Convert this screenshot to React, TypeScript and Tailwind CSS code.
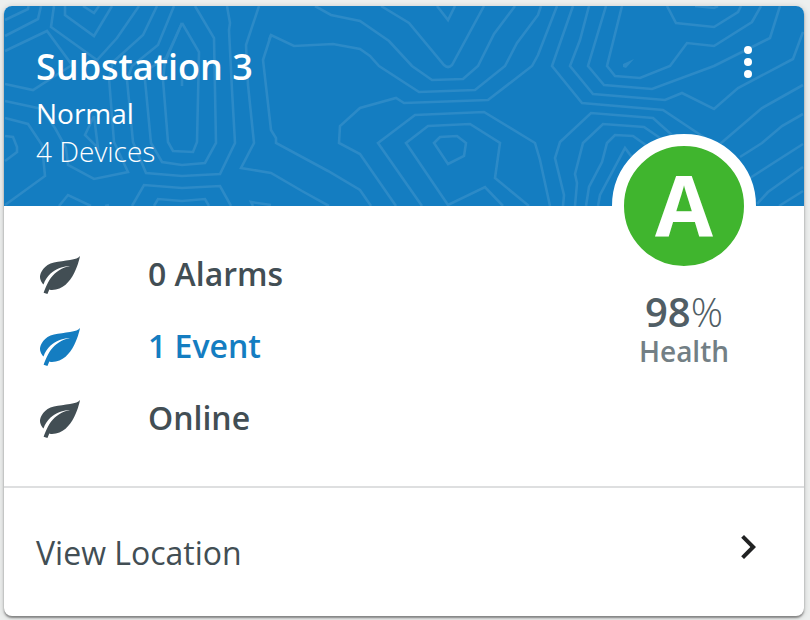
import React from 'react';

const contours = [
  'M5 20L28 9L28.500 6', 'M5 36L38 19L41 6', 'M5 51L47 31L72 65L33 90L5 84', 'M54 6L51 27L97 60L117 38L139 6',
  'M65 6L65 15L94 36L112 6', 'M83 6L94 13L99 6',
  'M5 101L42 109L55 128L66 148L68 165L94 179L128 172L114 142L109 78L113 62L143 35L157 6',
  'M5 118L28 124L42 145L45 176L5 205', 'M5 136L13 137L17 147L17 152L5 161',
  'M94 116L85 135L98 148L94 116', 'M59 206L68 195L91 206', 'M105 206L109 205',
  'M174 6L158 45L132 66L127 80L133 142L146 173L182 176L220 174L235 143L232 90L229 30L230 23L227 6',
  'M182 23L166 58L147 70L145 80L151 143L162 162L182 165L205 163L216 143L214 38L195 6',
  'M182 23L165 62L163 80L168 142L173 151L193 152L197 142L199 52L182 23',
  'M182 70L182 86', 'M132 206L144 185L182 188L220 186L231 206', 'M154 206L158 199L182 201L205 199L209 206',
  'M259 6L246 45L248 85L254 143L241 168L271 173L302 191L329 206',
  'M271 35L263 60L271 130L276 138L276 143L328 171L360 190L371 206',
  'M253 206L251 202L271 205',
  'M315 6L331 15L360 21L389 41L412 66L432 80L463 79L478 66L494 34L515 6',
  'M381 6L409 23L444 65Q448 69 452 65L484 6',
  'M437 6L448 20L455 6', 'M269 40L271 35L294 46L333 44L360 49L370 56L379 66L419 92L475 90L505 66L517 43L538 15L541 6',
  'M396 206L360 154L339 143L340 126L360 108L396 98L404 103L488 100L532 66L538 55L557 6',
  'M422 206L378 143L415 115L484 112L535 143L540 160L550 206',
  'M529 206L495 178L500 143L470 124L428 126L406 143L448 205L485 187L503 206',
  'M448 164L434 143L440 137L457 136L466 143L464 156Z',
  'M573 6L552 66L582 103L663 110L720 148',
  'M589 6L580 40L570 66L593 94L665 100L682 93L714 109L738 88L793 59L803 32',
  'M606 6L588 66L604 85L652 89L714 66L770 38L780 6',
  'M622 6L607 66L615 76L640 78L670 66L687 43L714 46L752 22L761 6',
  'M667 6L676 23L714 27L738 12L741 6', 'M695 6L714 8L718 6',
  'M563 206L564 195L555 158L560 142L591 113L653 118L672 135',
  'M575 206L577 183L575 174L583 143L603 124L644 127L663 140',
  'M586 206L589 187L602 162L607 143L615 135L633 136L650 148',
  'M598 206L600 195L625 148L640 168',
  'M720 144L762 108L803 85', 'M740 157L762 143L782 126L803 114', 'M750 178L803 144', 'M757 204L768 192L803 167', 'M779 206L803 191',
];

const rows = [
  { label: '0 Alarms', color: 'text-[#424e54]' },
  { label: '1 Event', color: 'text-[#147dc1]' },
  { label: 'Online', color: 'text-[#424e54]' },
];

function Leaf() {
  return (
    <svg viewBox="0 0 24 24" className="size-12" fill="currentColor">
      <path d="M17,8C8,10 5.9,16.17 3.82,21.34L5.71,22L6.66,19.7C7.14,19.87 7.64,20 8,20C19,20 22,3 22,3C21,5 14,5.25 9,6.25C4,7.25 2,11.5 2,13.5C2,15.5 3.75,17.25 3.75,17.25C7,8 17,8 17,8Z" />
    </svg>
  );
}

export default function App() {
  return (
    <main className="h-[620px] w-[810px] overflow-hidden bg-[#edefee] pt-1.5 pl-1 font-['Open_Sans',sans-serif]">
      <article className="flex h-[610px] w-[800px] flex-col rounded-lg bg-white shadow-[0_2px_2px_rgba(0,0,0,0.38),0_1px_6px_rgba(0,0,0,0.18)]">
        <header className="relative flex h-[200px] shrink-0 justify-between rounded-t-lg bg-[#147dc1] pt-8 pr-8 pl-8 text-white">
          <svg viewBox="4 6 800 200" className="absolute inset-0 size-full rounded-t-lg" fill="none" stroke="#2c8ac7" strokeWidth="2.600">
            {contours.map((d) => <path key={d} d={d} />)}
            <path d="M623 64L634 59L626 68L623 67Z" fill="#2c8ac7" stroke="none" />
          </svg>
          <div className="relative">
            <h1 className="h-14 text-[36px] leading-[58px] font-semibold">Substation 3</h1>
            <p className="h-[38px] text-[28px] leading-[38px]">Normal</p>
            <p className="text-[28px] leading-[38px] font-light">4 Devices</p>
          </div>
          <svg viewBox="0 0 24 24" className="relative size-12" fill="currentColor">
            <circle cx="12" cy="6" r="2" /><circle cx="12" cy="12" r="2" /><circle cx="12" cy="18" r="2" />
          </svg>
        </header>
        <section className="flex h-[280px] shrink-0 justify-between pt-8 pl-8">
          <ul>
            {rows.map((row) => (
              <li key={row.label} className={`flex h-[72px] items-center gap-16 ${row.color}`}>
                <Leaf />
                <span className="text-[32px] leading-[44px] font-semibold">{row.label}</span>
              </li>
            ))}
          </ul>
          <div className="relative -mt-[104px] mr-12 flex h-[240px] w-36 flex-col items-center">
            <div className="flex size-36 shrink-0 items-center justify-center rounded-full border-[12px] border-white bg-[#40b52e] text-[84px] leading-[120px] font-bold text-white"><span className="-mt-1">A</span></div>
            <div className="mt-[7px] text-[40px] leading-[54px] text-[#515e65]"><span className="font-semibold">98</span><span className="font-light">%</span></div>
            <div className="-mt-0.5 text-[28px] leading-[28px] font-semibold text-[#737f85]">Health</div>
          </div>
        </section>
        <footer className="flex grow items-center justify-between border-t-2 border-[#dedfe0] pt-0.5 pr-8 pl-8 text-[#424e54]">
          <span className="text-[32px] leading-[44px]">View Location</span>
          <svg viewBox="0 0 24 24" className="mb-3 size-12" fill="#212223"><path d="M10 6L8.590 7.410 13.170 12l-4.580 4.590L10 18l6-6z" /></svg>
        </footer>
      </article>
    </main>
  );
}
